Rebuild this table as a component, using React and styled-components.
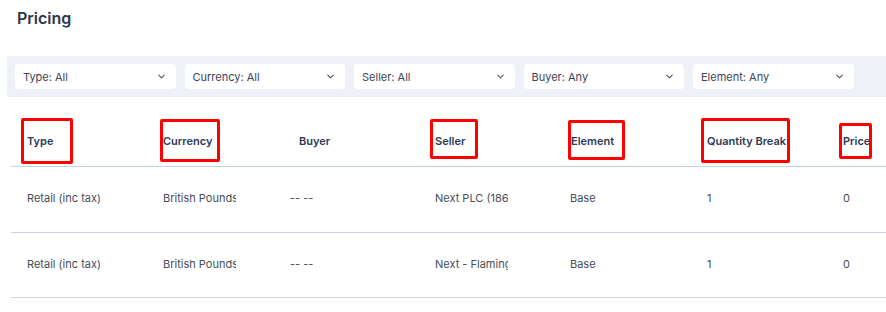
import React from "react";
import styled, { createGlobalStyle } from "styled-components";
import { ChevronDown } from "lucide-react";

const Global = createGlobalStyle`
  html, body { margin: 0; padding: 0; background: #fff; }
  body { font-family: Inter, "Noto Sans", sans-serif; -webkit-font-smoothing: antialiased; }
`;

const Page = styled.div`
  width: 886px;
  height: 312px;
  overflow: hidden;
  padding-left: 7px;
  box-sizing: border-box;
`;

const Title = styled.h1`
  margin: 0;
  padding: 8px 0 0 10px;
  font-size: 16px;
  line-height: 20px;
  font-weight: 600;
  color: #2b3647;
`;

const FilterBar = styled.div`
  margin-top: 28px;
  background: #eef1f5;
  padding: 8px 8px;
  display: flex;
  gap: 9px;
`;

const Select = styled.div`
  width: 160.5px;
  flex: none;
  height: 25px;
  background: #fff;
  border-radius: 4px;
  display: flex;
  align-items: center;
  justify-content: space-between;
  padding: 0 9px 0 8px;
  box-sizing: border-box;
  font-size: 11px;
  color: #3c4456;
  svg { color: #4a5263; }
`;

const Table = styled.div`
  margin: 19px 0 0 4px;
  display: grid;
  grid-template-columns: repeat(7, 136px);
`;

const HeadCell = styled.div`
  height: 50px;
  display: flex;
  align-items: center;
  padding-left: 16px;
  border-bottom: 1px solid #c3d1e0;
  font-size: 11px;
  font-weight: 600;
  color: #2e3a55;
  white-space: nowrap;
`;

const Label = styled.span`
  position: relative;
`;

/* red outline marking a header label */
const Mark = styled.span`
  position: absolute;
  left: ${(p) => p.$l}px;
  right: ${(p) => p.$r}px;
  top: ${(p) => p.$t}px;
  bottom: ${(p) => p.$b}px;
  border: 3px solid #ff0000;
  border-radius: 2px;
  pointer-events: none;
`;

const Cell = styled.div`
  height: 65.5px;
  box-sizing: border-box;
  display: flex;
  align-items: center;
  padding-left: ${(p) => p.$indent ?? 16}px;
  padding-bottom: 2px;
  border-bottom: 1px solid #cfd5de;
  font-size: 11px;
  color: #474d59;
`;

const Clip = styled.span`
  display: block;
  max-width: 73px;
  overflow: hidden;
  white-space: nowrap;
`;

const filters = ["Type: All", "Currency: All", "Seller: All", "Buyer: Any", "Element: Any"];

const headers = [
  { t: "Type", m: { l: -6, r: -20, t: -16, b: -16 } },
  { t: "Currency", m: { l: -3, r: -8, t: -15, b: -14 } },
  { t: "Buyer" },
  { t: "Seller", m: { l: -5, r: -13, t: -15, b: -11 } },
  { t: "Element", m: { l: -3, r: -11, t: -14, b: -12 } },
  { t: "Quantity Break", m: { l: -6, r: -4, t: -16, b: -15 } },
  { t: "Price", m: { l: -4, r: -2, t: -11, b: -11 } },
];

const indents = [16, 16, 7, 16, 15, 16, 16];

const rows = [
  ["Retail (inc tax)", "British Pounds", "-- --", "Next PLC (1865)", "Base", "1", "0"],
  ["Retail (inc tax)", "British Pounds", "-- --", "Next - Flamingo", "Base", "1", "0"],
];

export default function App() {
  return (
    <Page>
      <Global />
      <Title>Pricing</Title>
      <FilterBar>
        {filters.map((f) => (
          <Select key={f}>
            <span>{f}</span>
            <ChevronDown size={11} strokeWidth={2.2} />
          </Select>
        ))}
      </FilterBar>
      <Table>
        {headers.map((h) => (
          <HeadCell key={h.t}>
            <Label>
              {h.t}
              {h.m && <Mark $l={h.m.l} $r={h.m.r} $t={h.m.t} $b={h.m.b} />}
            </Label>
          </HeadCell>
        ))}
        {rows.map((r, i) =>
          r.map((c, j) => (
            <Cell key={`${i}-${j}`} $indent={indents[j]}>
              <Clip>{c}</Clip>
            </Cell>
          ))
        )}
      </Table>
    </Page>
  );
}
